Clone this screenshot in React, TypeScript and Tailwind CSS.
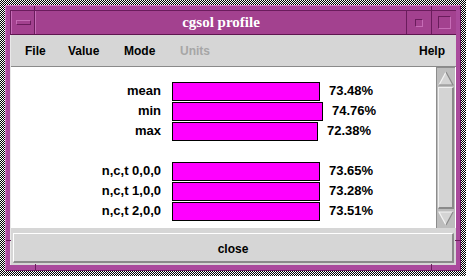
import React from "react";

type Row = { label: string; value: number };

const groups: Row[][] = [
  [
    { label: "mean", value: 73.48 },
    { label: "min", value: 74.76 },
    { label: "max", value: 72.38 },
  ],
  [
    { label: "n,c,t 0,0,0", value: 73.65 },
    { label: "n,c,t 1,0,0", value: 73.28 },
    { label: "n,c,t 2,0,0", value: 73.51 },
  ],
];

const sans = "font-['Liberation_Sans',Arial,sans-serif]";

function BarRow({ row }: { row: Row }) {
  const width = Math.round(row.value * 2) + 1;
  return (
    <div className="flex h-[20px] items-center">
      <span className={`w-[150px] text-right text-[13px] font-bold text-black ${sans}`}>{row.label}</span>
      <div
        className="ml-[11px] h-[19px] border border-black bg-[#ff00ff]"
        style={{ width }}
      />
      <span className={`ml-[9px] text-[13px] font-bold text-black ${sans}`}>{row.value.toFixed(2)}%</span>
    </div>
  );
}

function Arrow({ up }: { up?: boolean }) {
  return (
    <svg width="16" height="15" viewBox="0 0 16 15" className="block">
      {up ? (
        <>
          <polygon points="8,1 15,14 1,14" fill="#d4d4d4" />
          <polyline points="1,14 8,1" fill="none" stroke="#f4f4f4" strokeWidth="1.2" />
          <polyline points="8,1 15,14 1,14" fill="none" stroke="#8a8a8a" strokeWidth="1.2" />
        </>
      ) : (
        <>
          <polygon points="1,1 15,1 8,14" fill="#d4d4d4" />
          <polyline points="8,14 1,1 15,1" fill="none" stroke="#f4f4f4" strokeWidth="1.2" />
          <polyline points="15,1 8,14" fill="none" stroke="#8a8a8a" strokeWidth="1.2" />
        </>
      )}
    </svg>
  );
}

function Scrollbar() {
  return (
    <div className="mr-[1px] flex w-[19px] flex-col border-l border-t border-[#8c8c8c] bg-[#bdbdbd]">
      <div className="flex h-[18px] items-center justify-center pt-[2px]">
        <Arrow up />
      </div>
      <div className="mx-[1px] my-[1px] flex-1 border-l border-t border-[#f0f0f0] border-r-2 border-b-2 border-r-[#8a8a8a] border-b-[#8a8a8a] bg-[#d4d4d4]" />
      <div className="flex h-[18px] items-center justify-center pb-[2px]">
        <Arrow />
      </div>
    </div>
  );
}

export default function App() {
  return (
    <div className="h-[276px] w-[466px] bg-[#808080] bg-[image:repeating-conic-gradient(#000000_0%_25%,#ffffff_0%_50%)] bg-[length:2px_2px] p-[5px]">
      <div className="relative flex h-[266px] flex-col border-l border-t border-[#d27cc3] border-r border-b border-r-[#6a1c5c] border-b-[#6a1c5c] bg-[#aa4a9c] px-[4px] pt-[4px] pb-[5px]">
        {/* frame corner ticks */}
        <div className="absolute left-[28px] top-0 h-[5px] w-[1px] bg-[#6a1c5c]" />
        <div className="absolute right-[28px] top-0 h-[5px] w-[1px] bg-[#6a1c5c]" />
        <div className="absolute bottom-0 left-[29px] h-[6px] w-[1px] bg-[#6a1c5c]" />
        <div className="absolute bottom-0 right-[28px] h-[6px] w-[1px] bg-[#6a1c5c]" />
        <div className="absolute bottom-[29px] left-0 h-[1px] w-[5px] bg-[#6a1c5c]" />
        <div className="absolute bottom-[29px] right-0 h-[1px] w-[5px] bg-[#6a1c5c]" />

        {/* title bar */}
        <div className="flex h-[25px] border-t border-l border-[#6a1c5c] border-b border-b-[#5e1650] bg-[#a3418f]">
          <div className="flex w-[24px] items-center justify-center border-r border-[#6a1c5c] border-l border-l-[#c66cb6]">
            <div className="h-[5px] w-[15px] border border-[#c66cb6] border-r-[#6a1c5c] border-b-[#6a1c5c]" />
          </div>
          <div className="flex flex-1 items-center justify-center border-l border-[#c66cb6]">
            <span className="font-['Liberation_Serif','Times_New_Roman',serif] text-[15px] font-bold leading-none text-white">
              cgsol profile
            </span>
          </div>
          <div className="flex w-[25px] items-center justify-center border-l border-[#6a1c5c]">
            <div className="h-[8px] w-[8px] border border-[#6a1c5c] border-r-[#c66cb6] border-b-[#c66cb6]" />
          </div>
          <div className="flex w-[25px] items-center justify-center border-l border-[#6a1c5c]">
            <div className="h-[13px] w-[13px] border border-[#6a1c5c] border-r-[#c66cb6] border-b-[#c66cb6]" />
          </div>
        </div>

        {/* client */}
        <div className="flex flex-1 flex-col border-l border-[#e8e8e8] bg-[#d6d6d6]">
          <div className={`flex h-[32px] items-center border-b border-[#8a8a8a] pl-[14px] pr-[11px] text-[12px] font-bold text-black ${sans}`}>
            <span className="w-[43px]">File</span>
            <span className="w-[56px]">Value</span>
            <span className="w-[56px]">Mode</span>
            <span className="text-[#a6a6a6]">Units</span>
            <span className="ml-auto">Help</span>
          </div>

          <div className="flex h-[161px] bg-white">
            <div className="flex flex-1 flex-col gap-[20px] pt-[14px]">
              {groups.map((g, i) => (
                <div key={i}>
                  {g.map((r) => (
                    <BarRow key={r.label} row={r} />
                  ))}
                </div>
              ))}
            </div>
            <Scrollbar />
          </div>

          <div className="flex flex-1 flex-col px-[2px] pt-[5px] pb-[2px]">
            <div className={`flex flex-1 items-center justify-center border-t border-l border-white border-b-2 border-r-2 border-b-[#8a8a8a] border-r-[#8a8a8a] bg-[#d6d6d6] pt-[2px] text-[12px] font-bold text-black ${sans}`}>
              close
            </div>
          </div>
        </div>
      </div>
    </div>
  );
}
